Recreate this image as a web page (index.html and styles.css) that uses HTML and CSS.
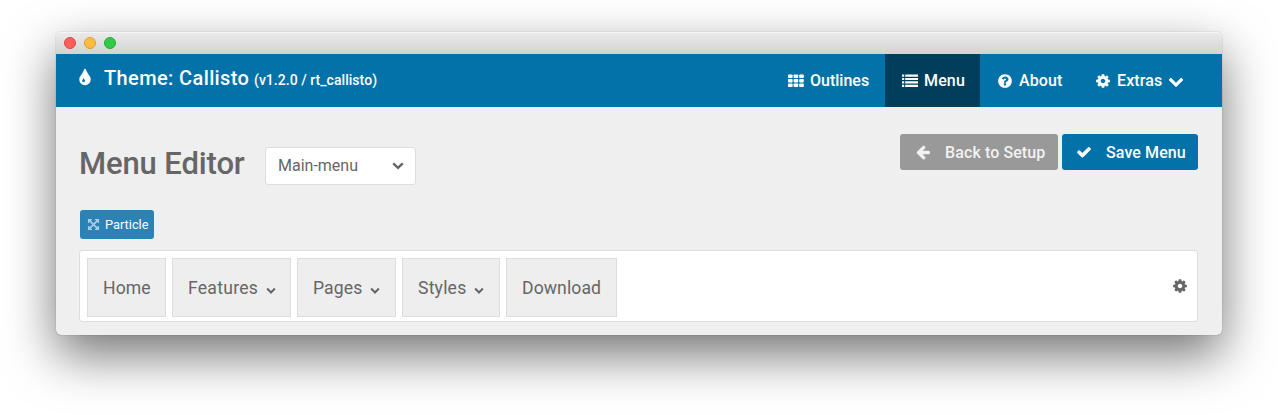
FILE: index.html
```html
<!DOCTYPE html>
<html lang="en">
<head>
<meta charset="utf-8">
<title>Menu Editor</title>
<link rel="stylesheet" href="styles.css">
</head>
<body>
<svg class="sprite" aria-hidden="true">
  <symbol id="tint" viewBox="0 0 1792 1792"><path d="M896 1152q0-36-20-69-1-1-15.5-22.5t-25.5-38-25-44-21-50.5q-4-16-21-16t-21 16q-7 23-21 50.5t-25 44-25.5 38-15.5 22.5q-20 33-20 69 0 53 37.5 90.5t90.5 37.5 90.5-37.5 37.5-90.5zm512-128q0 212-150 362t-362 150-362-150-150-362q0-145 81-275 6-9 62.5-90.5t101-151 99.5-178 83-201.5q9-30 34-47t51-17 51.5 17 33.5 47q28 93 83 201.5t99.5 178 101 151 62.5 90.5q81 127 81 275z"/></symbol>
  <symbol id="cog" viewBox="0 0 1792 1792"><path d="M1152 896q0-106-75-181t-181-75-181 75-75 181 75 181 181 75 181-75 75-181zm512-109v222q0 12-8 23t-20 13l-185 28q-19 54-39 91 35 50 107 138 10 12 10 25t-9 23q-27 37-99 108t-94 71q-12 0-26-9l-138-108q-44 23-91 38-16 136-29 186-7 28-36 28h-222q-14 0-24.5-8.5t-11.5-21.5l-28-184q-49-16-90-37l-141 107q-10 9-25 9-14 0-25-11-126-114-165-168-7-10-7-23 0-12 8-23 15-21 51-66.5t54-70.5q-27-50-41-99l-183-27q-13-2-21-12.5t-8-23.5v-222q0-12 8-23t19-13l186-28q14-46 39-92-40-57-107-138-10-12-10-24 0-10 9-23 26-36 98.5-107.5t94.5-71.5q13 0 26 10l138 107q44-23 91-38 16-136 29-186 7-28 36-28h222q14 0 24.5 8.5t11.5 21.5l28 184q49 16 90 37l142-107q9-9 24-9 13 0 25 10 129 119 165 170 7 8 7 22 0 12-8 23-15 21-51 66.5t-54 70.5q26 50 41 98l183 28q13 2 21 12.5t8 23.5z"/></symbol>
  <symbol id="chevron" viewBox="0 0 1792 1792"><path d="M1683 808l-742 741q-19 19-45 19t-45-19l-742-741q-19-19-19-45.500t19-45.500l166-165q19-19 45-19t45 19l531 531 531-531q19-19 45-19t45 19l166 165q19 19 19 45.500t-19 45.500z"/></symbol>
  <symbol id="check" viewBox="0 0 1792 1792"><path d="M1671 566q0 40-28 68l-724 724-136 136q-28 28-68 28t-68-28l-136-136-362-362q-28-28-28-68t28-68l136-136q28-28 68-28t68 28l294 295 656-657q28-28 68-28t68 28l136 136q28 28 28 68z"/></symbol>
  <symbol id="back" viewBox="0 0 1792 1792"><path d="M1664 896v128q0 53-32.500 90.500t-84.500 37.500h-704l293 294q38 36 38 90t-38 90l-75 76q-37 37-90 37-52 0-91-37l-651-652q-37-37-37-90 0-52 37-91l651-650q38-38 91-38 52 0 90 38l75 74q38 38 38 91t-38 91l-293 293h704q52 0 84.500 37.500t32.500 90.500z"/></symbol>
  <symbol id="question" viewBox="0 0 1792 1792"><path d="M1024 1376v-192q0-14-9-23t-23-9h-192q-14 0-23 9t-9 23v192q0 14 9 23t23 9h192q14 0 23-9t9-23zm256-672q0-88-55.500-163t-138.500-116-170-41q-243 0-371 213-15 24 8 42l132 100q7 6 19 6 16 0 25-12 53-68 86-92 34-24 86-24 48 0 85.500 26t37.500 59q0 38-20 61t-68 45q-63 28-115.500 86.500t-52.500 125.500v36q0 14 9 23t23 9h192q14 0 23-9t9-23q0-19 21.500-49.500t54.500-49.500q32-18 49-28.500t46-35 44.500-48 28-60.500 12.500-81zm384 192q0 209-103 385.500t-279.500 279.500-385.500 103-385.500-103-279.500-279.500-103-385.500 103-385.500 279.500-279.500 385.500-103 385.500 103 279.500 279.500 103 385.500z"/></symbol>
  <symbol id="arrows" viewBox="0 0 1792 1792"><path d="M1411 541l-355 355 355 355 144-144q29-31 70-14 39 17 39 59v448q0 26-19 45t-45 19h-448q-42 0-59-40-17-39 14-69l144-144-355-355-355 355 144 144q31 30 14 69-17 40-59 40h-448q-26 0-45-19t-19-45v-448q0-42 40-59 39-17 69 14l144 144 355-355-355-355-144 144q-19 19-45 19-12 0-24-5-40-17-40-59v-448q0-26 19-45t45-19h448q42 0 59 40 17 39-14 69l-144 144 355 355 355-355-144-144q-31-30-14-69 17-40 59-40h448q26 0 45 19t19 45v448q0 42-39 59-13 5-25 5-26 0-45-19z"/></symbol>
  <symbol id="grid" viewBox="0 0 16 16">
    <rect x="0" y="1.500" width="4.600" height="3.600" rx=".8"/><rect x="5.600" y="1.500" width="4.600" height="3.600" rx=".8"/><rect x="11.200" y="1.500" width="4.600" height="3.600" rx=".8"/>
    <rect x="0" y="6" width="4.600" height="3.600" rx=".8"/><rect x="5.600" y="6" width="4.600" height="3.600" rx=".8"/><rect x="11.200" y="6" width="4.600" height="3.600" rx=".8"/>
    <rect x="0" y="10.500" width="4.600" height="3.600" rx=".8"/><rect x="5.600" y="10.500" width="4.600" height="3.600" rx=".8"/><rect x="11.200" y="10.500" width="4.600" height="3.600" rx=".8"/>
  </symbol>
  <symbol id="list" viewBox="0 0 16 16"><path d="M0 1.500h2.200v2.200H0zM0 4.900h2.200v2.200H0zM0 8.300h2.200v2.200H0zM0 11.700h2.200v2.200H0zM3.200 1.500H16v2.200H3.200zM3.200 4.900H16v2.200H3.200zM3.200 8.300H16v2.200H3.200zM3.200 11.700H16v2.200H3.200z"/></symbol>
</svg>

<div class="window">
  <div class="titlebar">
    <span class="dot dot-close"></span><span class="dot dot-min"></span><span class="dot dot-max"></span>
  </div>
  <header class="header">
    <div class="brand">
      <svg class="icon brand-icon"><use href="#tint"/></svg>
      <span class="brand-name">Theme: Callisto</span>
      <span class="brand-version">(v1.2.0 / rt_callisto)</span>
    </div>
    <nav class="nav">
      <a class="nav-item"><svg class="icon"><use href="#grid"/></svg><span>Outlines</span></a>
      <a class="nav-item active"><svg class="icon"><use href="#list"/></svg><span>Menu</span></a>
      <a class="nav-item nav-about"><svg class="icon"><use href="#question"/></svg><span>About</span></a>
      <a class="nav-item nav-extras"><svg class="icon"><use href="#cog"/></svg><span>Extras</span><svg class="icon"><use href="#chevron"/></svg></a>
    </nav>
  </header>
  <main class="content">
    <div class="toolbar">
      <h1 class="heading">Menu Editor</h1>
      <div class="select"><span>Main-menu</span><svg class="icon select-icon"><use href="#chevron"/></svg></div>
      <div class="actions">
        <a class="button button-back"><svg class="icon"><use href="#back"/></svg><span>Back to Setup</span></a>
        <a class="button button-save"><svg class="icon"><use href="#check"/></svg><span>Save Menu</span></a>
      </div>
    </div>
    <a class="particle"><svg class="icon particle-icon"><use href="#arrows"/></svg><span>Particle</span></a>
    <div class="menubar">
      <div class="menu-item menu-home">Home</div>
      <div class="menu-item menu-features">Features<svg class="icon caret"><use href="#chevron"/></svg></div>
      <div class="menu-item menu-pages">Pages<svg class="icon caret"><use href="#chevron"/></svg></div>
      <div class="menu-item menu-styles">Styles<svg class="icon caret"><use href="#chevron"/></svg></div>
      <div class="menu-item menu-download">Download</div>
      <svg class="icon settings"><use href="#cog"/></svg>
    </div>
  </main>
</div>
</body>
</html>
```
FILE: styles.css
```css
* { box-sizing: border-box; }
body { margin: 0; height: 415px; overflow: hidden; padding: 32px 56px 0; background: #fff; font-family: Roboto, "Liberation Sans", sans-serif; font-size: 16px; color: #666; }
.sprite { position: absolute; width: 0; height: 0; }
.icon { width: 16px; height: 16px; flex: none; fill: currentColor; }
.window { height: 303px; border-radius: 5px; background: #efefef; box-shadow: 0 0 1px rgba(0,0,0,.5), 0 20px 50px rgba(0,0,0,.55); }
.titlebar { display: flex; gap: 8px; height: 22px; padding: 5px 8px; border-radius: 5px 5px 0 0; background: linear-gradient(#ebebeb, #d3d3d3); box-shadow: inset 0 1px #f6f6f6; }
.dot { width: 12px; height: 12px; border-radius: 50%; border: 1px solid; }
.dot-close { background: #fc605b; border-color: #de4643; }
.dot-min { background: #fdbc40; border-color: #de9f34; }
.dot-max { background: #33c949; border-color: #27aa35; }
.header { display: flex; justify-content: space-between; height: 53px; background: #0272a9; color: #fff; }
.brand { display: flex; align-items: baseline; padding: 11px 0 0 19px; line-height: 26px; }
.brand-icon { width: 20px; height: 20px; align-self: flex-start; margin-top: 3px; }
.brand-name { width: 145px; margin-left: 9px; font-size: 20px; letter-spacing: .38px; font-weight: 500; white-space: nowrap; }
.brand-version { margin-left: 5px; font-size: 14px; letter-spacing: .04px; font-weight: 500; }
.nav { display: flex; padding-right: 22px; font-weight: 500; }
.nav-item { display: flex; align-items: center; gap: 6px; width: 113px; padding-left: 16px; }
.nav-item.active { width: 95px; padding-left: 17px; letter-spacing: .15px; background: #003e5b; }
.nav-item.nav-about { width: 98px; padding-left: 17px; letter-spacing: .1px; }
.nav-item.nav-extras { width: 122px; padding-left: 17px; letter-spacing: .1px; }
.content { padding: 27px 24px 0; }
.toolbar { display: flex; height: 76px; }
.heading { width: 186px; margin: 10px 0 0 -1px; font-size: 31px; letter-spacing: -.12px; line-height: 40px; font-weight: 500; white-space: nowrap; }
.select { display: flex; align-items: center; justify-content: space-between; width: 151px; height: 38px; margin-top: 13px; padding: 0 11px 2px 12px; border: 1px solid #ddd; border-radius: 3px; background: #fff; }
.select-icon { width: 12px; height: 12px; }
.actions { display: flex; gap: 4px; margin-left: auto; }
.button { display: flex; align-items: center; gap: 14px; height: 36px; width: 158px; padding-left: 15px; border-radius: 3px; background: #999; color: #f2f2f2; font-weight: 500; letter-spacing: .1px; }
.button-save { width: 136px; padding-left: 14px; background: #0272a9; color: #fff; }
.particle { display: flex; align-items: center; gap: 5px; width: 74px; height: 29px; padding-left: 7px; border-radius: 3px; background: #2a82b7; color: #fff; font-size: 12.8px; }
.particle-icon { width: 13px; height: 13px; opacity: .6; }
.menubar { display: flex; gap: 6px; height: 72px; margin: 11px 0 0 -1px; padding: 7px; border: 1px solid #ddd; border-radius: 3px; background: #fff; }
.menu-item { display: flex; align-items: center; height: 59px; padding-left: 15px; border: 1px solid #ddd; background: #eee; font-size: 17.6px; letter-spacing: .1px; }
.menu-home { width: 79px; }
.menu-features { width: 119px; letter-spacing: .25px; }
.menu-pages { width: 99px; }
.menu-styles { width: 98px; letter-spacing: .2px; }
.menu-download { width: 111px; }
.caret { width: 10px; height: 10px; margin: 4px 0 0 8px; }
.settings { margin: 20px 2px 0 auto; }
```
